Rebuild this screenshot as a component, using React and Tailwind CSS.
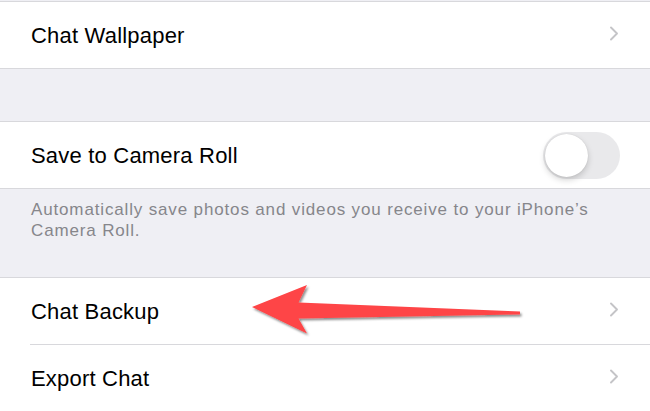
const Chevron = () => (
    <svg width="10" height="15" viewBox="0 0 10 15" className="shrink-0 mt-[-3px]">
        <path d="M2 1.5 L8 7.5 L2 13.5" fill="none" stroke="#c4c4c7" strokeWidth="1.9" strokeLinecap="round" strokeLinejoin="round" />
    </svg>
);

const Row = ({ label, children }) => (
    <div className="h-[66px] flex items-center justify-between pl-[31px] pr-[31px] bg-white">
        <span className="text-[22px] text-black tracking-[0.2px]">{label}</span>
        {children}
    </div>
);

const Toggle = () => (
    <div className="w-[77px] h-[47px] rounded-full bg-[#e9e9eb] flex items-center pl-[2px] mr-[-1px]">
        <div className="w-[43px] h-[43px] rounded-full bg-white shadow-[0_3px_6px_rgba(0,0,0,0.18),0_0_1px_rgba(0,0,0,0.15)]" />
    </div>
);

const App = () => {
    return (
        <div className="relative w-[650px] h-[411px] overflow-hidden bg-[#efeff4]" style={{ fontFamily: '"Liberation Sans", Arial, sans-serif' }}>
            <div className="h-[1px]" />
            <div className="border-y border-[#d8d8dc]">
                <Row label="Chat Wallpaper">
                    <Chevron />
                </Row>
            </div>

            <div className="h-[52px]" />

            <div className="border-y border-[#d8d8dc]">
                <Row label="Save to Camera Roll">
                    <Toggle />
                </Row>
            </div>

            {/* footer note */}
            <div className="h-[88px] pl-[31px] pr-2 pt-[10px] text-[17px] leading-[21px] tracking-[0.85px] text-[#86868b] whitespace-nowrap">
                Automatically save photos and videos you receive to your iPhone’s
                <br />
                Camera Roll.
            </div>

            <div className="border-t border-[#d8d8dc] bg-white">
                <Row label="Chat Backup">
                    <Chevron />
                </Row>
                <div className="ml-[30px] h-[1px] bg-[#d8d8dc]" />
                <Row label="Export Chat">
                    <Chevron />
                </Row>
            </div>

            {/* red arrow overlay */}
            <svg className="absolute left-0 top-0 pointer-events-none" width="650" height="411">
                <defs>
                    <filter id="sh" x="-10%" y="-30%" width="120%" height="160%">
                        <feDropShadow dx="1.5" dy="2" stdDeviation="1.2" floodColor="#000" floodOpacity="0.45" />
                    </filter>
                </defs>
                <path
                    d="M252 307 L307 285 L298.5 302.5 L520 311.5 L520 314.5 L298.5 318.5 L307 333.5 Z"
                    fill="#fe4446"
                    filter="url(#sh)"
                />
            </svg>
        </div>
    );
};

export default App;
